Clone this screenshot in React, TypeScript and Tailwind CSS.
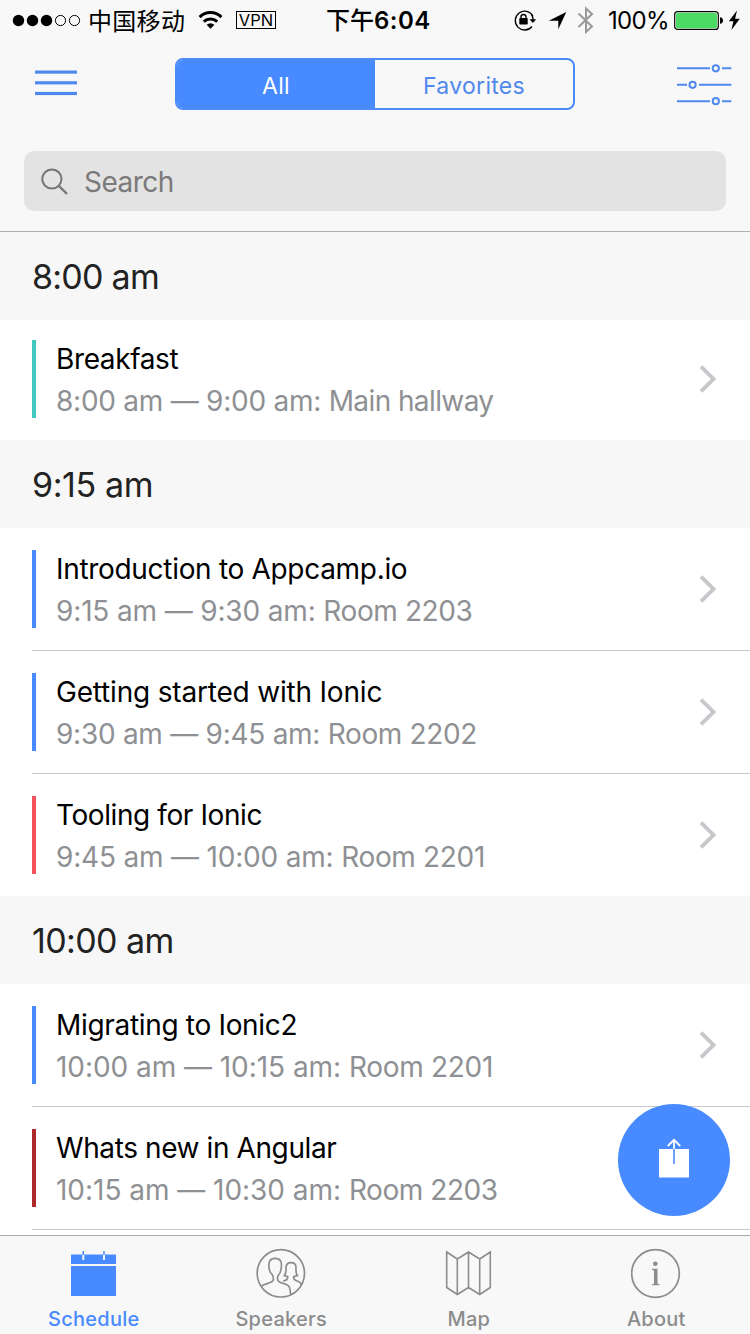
import React from "react";

type Session = {
  title: string;
  hours: string;
  place: string;
  color: string;
  titleSpacing: string;
  hoursSpacing: string;
  placeSpacing: string;
};

type Group = { time: string; spacing: string; sessions: Session[] };

const groups: Group[] = [
  {
    time: "8:00 am",
    spacing: "tracking-[-0.75px]",
    sessions: [
      { title: "Breakfast", hours: "8:00 am — 9:00 am: ", place: "Main hallway", color: "bg-[#41c8bf]", titleSpacing: "tracking-[-0.38px]", hoursSpacing: "tracking-[-0.25px]", placeSpacing: "tracking-[-0.6px]" },
    ],
  },
  {
    time: "9:15 am",
    spacing: "tracking-[-0.4px]",
    sessions: [
      { title: "Introduction to Appcamp.io", hours: "9:15 am — 9:30 am: ", place: "Room 2203", color: "bg-[#488aff]", titleSpacing: "tracking-[-0.31px]", hoursSpacing: "tracking-[-0.15px]", placeSpacing: "tracking-[-0.4px]" },
      { title: "Getting started with Ionic", hours: "9:30 am — 9:45 am: ", place: "Room 2202", color: "bg-[#488aff]", titleSpacing: "tracking-[-0.19px]", hoursSpacing: "tracking-[-0.27px]", placeSpacing: "tracking-[-0.36px]" },
      { title: "Tooling for Ionic", hours: "9:45 am — 10:00 am: ", place: "Room 2201", color: "bg-[#f5525b]", titleSpacing: "tracking-[-0.41px]", hoursSpacing: "tracking-[-0.19px]", placeSpacing: "tracking-[-0.33px]" },
    ],
  },
  {
    time: "10:00 am",
    spacing: "tracking-[-0.6px]",
    sessions: [
      { title: "Migrating to Ionic2", hours: "10:00 am — 10:15 am: ", place: "Room 2201", color: "bg-[#488aff]", titleSpacing: "tracking-[-0.32px]", hoursSpacing: "tracking-[-0.05px]", placeSpacing: "tracking-[-0.3px]" },
      { title: "Whats new in Angular", hours: "10:15 am — 10:30 am: ", place: "Room 2203", color: "bg-[#ac282b]", titleSpacing: "tracking-[-0.4px]", hoursSpacing: "tracking-[-0.03px]", placeSpacing: "tracking-[-0.45px]" },
    ],
  },
];

function StatusBar() {
  return (
    <div className="grid h-10 shrink-0 grid-cols-[326px_1fr_238px] items-start text-[24px] leading-10 text-black">
      <div className="flex h-10 items-center pl-3">
        <svg className="h-10 w-[70px]" viewBox="0 0 70 40" fill="none">
          <circle cx="6.5" cy="20.5" r="5.7" fill="#000" />
          <circle cx="20.5" cy="20.5" r="5.7" fill="#000" />
          <circle cx="34.5" cy="20.5" r="5.7" fill="#000" />
          <circle cx="48.5" cy="20.5" r="5.1" stroke="#000" />
          <circle cx="62.5" cy="20.5" r="5.1" stroke="#000" />
        </svg>
        <span className="ml-[6px] h-10 w-[98px] whitespace-nowrap font-['Noto_Sans_CJK_SC',sans-serif] tracking-[0.3px]">中国移动</span>
        <svg className="ml-3 h-5 w-[25px]" viewBox="0 0 25 20" fill="none" stroke="#000" strokeWidth="3">
          <path d="M1.6 7.1C7.8 1 17.2 1 23.4 7.1" />
          <path d="M5.8 11.6C9.6 8 15.4 8 19.2 11.6" />
          <path d="M12.5 18.7L8.6 14.8Q12.5 11.5 16.4 14.8Z" fill="#000" stroke="none" />
        </svg>
        <span className="ml-[13px] flex h-[18px] w-10 items-center justify-center border border-black text-[16.5px] leading-none">VPN</span>
      </div>
      <div className="h-10 whitespace-nowrap font-medium leading-[38px] tracking-[0.5px]">
        <span className="font-['Noto_Sans_CJK_SC',sans-serif] tracking-normal">下午</span>
        <span className="font-semibold">6:04</span>
      </div>
      <div className="flex h-10 items-center">
        <svg className="h-10 w-[94px]" viewBox="0 0 94 40" fill="none">
          <path d="M20 26.5A9.4 9.4 0 1 1 20.900 16" stroke="#000" strokeWidth="1.3" />
          <path d="M19.500 14.500Q21 16.500 21 20" stroke="#000" strokeWidth="1.3" />
          <path d="M17.500 19.300H24.200L20.800 23Z" fill="#000" />
          <rect x="7.300" y="18" width="8.400" height="6.500" rx="0.700" fill="#000" />
          <path d="M9 19V17Q9 14.500 11.500 14.500Q14 14.500 14 17V19" stroke="#000" strokeWidth="1.400" />
          <path d="M54.300 12L46.300 29.300V20.700H36.800Z" fill="#000" />
          <path d="M66.500 13.500L80 26.500L74 32V8.500L80 14L66.500 27" stroke="#999" strokeWidth="2" />
        </svg>
        <span className="ml-[2px] h-10 w-[61px] whitespace-nowrap text-[24px] leading-[42px] tracking-[-0.7px]">100%</span>
        <svg className="ml-[4px] h-10 w-[70px]" viewBox="0 0 70 40" fill="none">
          <rect x="1.700" y="11.600" width="43.600" height="17.800" rx="3" fill="#fff" stroke="#000" strokeWidth="1.200" />
          <rect x="3" y="12.800" width="41" height="15.400" rx="2" fill="#4cd964" />
          <path d="M47 17.300Q50 17.500 50 20.500Q50 23.500 47 23.700Z" fill="#000" />
          <path d="M64 10.500L55.800 21.300H60.400L58.400 30L66.800 18.800H62.100Z" fill="#000" />
        </svg>
      </div>
    </div>
  );
}

function NavBar() {
  return (
    <div className="flex h-[88px] shrink-0 items-start pl-[35px] pt-[18px]">
      <svg className="mt-[12px] h-[26px] w-[42px]" viewBox="0 0 42 26" fill="#5089ee">
        <rect y="0.5" width="42" height="3.2" />
        <rect y="11.2" width="42" height="3.2" />
        <rect y="21.9" width="42" height="3.2" />
      </svg>
      <div className="ml-[98px] flex h-[52px] w-[400px] overflow-hidden rounded-[8px] border-2 border-[#4c8bf5] text-[23px] leading-[52px] tracking-[0.3px]">
        <div className="w-[198px] bg-[#488aff] text-center text-white">All</div>
        <div className="w-[198px] text-center text-[#5089ee]">Favorites</div>
      </div>
      <svg className="ml-[102px] mt-[4px] h-[46px] w-[55px]" viewBox="0 0 55 46" fill="none" stroke="#5089ee" strokeWidth="2">
        <path d="M0 6.3H33M45 6.3H54.3M0 22.8H10M22 22.8H54.3M0 39.2H33M45 39.2H54.3" />
        <circle cx="38.8" cy="6.3" r="3.1" />
        <circle cx="15.6" cy="22.8" r="3.1" />
        <circle cx="38.8" cy="39.2" r="3.1" />
      </svg>
    </div>
  );
}

function SearchBar() {
  return (
    <div className="h-[104px] shrink-0 border-b border-[#b0b0b0] px-6 pt-[23px]">
      <div className="flex h-[60px] items-center rounded-[10px] bg-[#e3e3e3] pl-[17px] text-[28px] text-[#7a7a7a]">
        <svg className="mt-[2px] h-7 w-7" viewBox="0 0 28 28" fill="none" stroke="#777" strokeWidth="2">
          <circle cx="10.9" cy="11" r="9.6" />
          <path d="M17.9 18L26 25.8" strokeWidth="2.4" />
        </svg>
        <span className="ml-[15px] mt-px tracking-[-0.5px]">Search</span>
      </div>
    </div>
  );
}

function SessionRow({ session, first, last }: { session: Session; first: boolean; last: boolean }) {
  return (
    <div className={first ? "h-[120px] shrink-0 pl-8" : last ? "h-[122px] shrink-0 pl-8" : "h-[123px] shrink-0 pl-8"}>
      <div className={first || last ? "flex h-full items-start" : "flex h-full items-start border-b border-[#c8c7cc]"}>
        <div className={first ? "mt-5 flex h-[78px] grow" : "mt-[22px] flex h-[78px] grow"}>
          <div className={`w-1 ${session.color}`} />
          <div className="ml-5 grow whitespace-nowrap text-[28px]">
            <div className={`-mt-[2px] h-[42px] leading-[42px] text-black ${session.titleSpacing}`}>{session.title}</div>
            <div className="h-[42px] leading-[42px] text-[#8e9093]">
              <span className={session.hoursSpacing}>{session.hours}</span>
              <span className={session.placeSpacing}>{session.place}</span>
            </div>
          </div>
          <svg className="mr-[33px] mt-[25px] h-7 w-[18px]" viewBox="0 0 18 28" fill="none" stroke="#c7c7cc" strokeWidth="3.8">
            <path d="M2 1.7L14.5 14L2 26.3" />
          </svg>
        </div>
      </div>
    </div>
  );
}

function ShareButton() {
  return (
    <button className="absolute left-[618px] top-[1104px] flex h-28 w-28 items-center justify-center rounded-full bg-[#488aff]">
      <svg className="-mt-[4px] h-10 w-8" viewBox="0 0 32 40" fill="none">
        <path d="M1 11H15.2V26H16.800V11H31V39.500H1Z" fill="#fff" />
        <path d="M16 11V1.500M9.800 8L16 1.800L22.200 8" stroke="#fff" strokeWidth="1.8" />
      </svg>
    </button>
  );
}

function ScheduleIcon() {
  return (
    <svg className="h-[51px] w-[51px]" viewBox="0 0 51 51" fill="#488aff">
      <path d="M3 6.5H14.3V12H16.3V6.5H35V12H37V6.5H48V16H3Z" />
      <path d="M3 18H48V48H3Z" />
      <path d="M14.5 3H16V7H14.5ZM35.2 3H36.7V7H35.2Z" />
    </svg>
  );
}

function SpeakersIcon() {
  return (
    <svg className="h-[51px] w-[51px]" viewBox="767 54 153 153" fill="none" stroke="#8c8c8c" strokeWidth="5">
      <circle cx="841.5" cy="130" r="71" />
      <path d="M784 168C794 160 813 161 818 152C820 146 819 139 815 133C809 130 807 121 806 112C804 95 809 85 824.500 85C840 85 845 95 843 112C842 121 841 130 835 134C831 140 831 149 835 154C843 162 862 160 867 171C870 178 870 185 871 194" />
      <path d="M848 153C857 152 863 150 862 140L852 137C858 131 857 121 857 112C858 102 863 98 872 98C881 98 887 103 887 113C887 122 886 132 891 137L880 140C879 148 883 151 890 153C897 155 902 158 904 165" />
    </svg>
  );
}

function MapIcon() {
  return (
    <svg className="h-[51px] w-[51px]" viewBox="0 0 51 51" fill="none" stroke="#8c8c8c" strokeWidth="1.6">
      <path d="M3.700 4L14.300 11L25.500 4L36.700 11L47.300 4V39.500L36.700 46.500L25.500 39.500L14.300 46.500L3.700 39.500ZM14.300 11V46.500M25.500 4V39.500M36.700 11V46.500" />
    </svg>
  );
}

function AboutIcon() {
  return (
    <svg className="h-[51px] w-[51px]" viewBox="1 0 51 51" fill="none">
      <circle cx="25.500" cy="25.500" r="23.800" stroke="#8c8c8c" strokeWidth="1.700" />
      <circle cx="25.300" cy="15.700" r="2.300" fill="#8c8c8c" />
      <path d="M22 20.800H27.500V35.200Q27.500 36.300 29.500 36.300V37.300H22V36.300Q24 36.300 24 35.200V23Q24 21.900 22 21.900Z" fill="#8c8c8c" />
    </svg>
  );
}

const tabs = [
  { label: "Schedule", icon: <ScheduleIcon />, color: "text-[#488aff]" },
  { label: "Speakers", icon: <SpeakersIcon />, color: "text-[#8c8c8c]" },
  { label: "Map", icon: <MapIcon />, color: "text-[#8c8c8c]" },
  { label: "About", icon: <AboutIcon />, color: "text-[#8c8c8c]" },
];

export default function App() {
  return (
    <div className="relative flex h-[1334px] w-[750px] flex-col overflow-hidden bg-white font-['Inter','Noto_Sans_CJK_SC',sans-serif]">
      <header className="flex shrink-0 flex-col bg-[#f8f8f8]">
        <StatusBar />
        <NavBar />
        <SearchBar />
      </header>
      <main className="flex min-h-0 grow flex-col overflow-hidden">
        {groups.map((group, g) => (
          <section key={group.time} className="shrink-0">
            <h2 className={`h-[88px] bg-[#f7f7f7] pl-8 text-[34px] leading-[89px] text-[#222] ${group.spacing}`}>{group.time}</h2>
            {group.sessions.map((session, i) => (
              <SessionRow
                key={session.title}
                session={session}
                first={group.sessions.length === 1}
                last={g === 1 && i === group.sessions.length - 1}
              />
            ))}
          </section>
        ))}
      </main>
      <nav className="grid h-[99px] shrink-0 grid-cols-4 border-t border-[#a9a9ab] bg-[#f8f8f8]">
        {tabs.map((tab) => (
          <div key={tab.label} className={`flex flex-col items-center pt-[12px] ${tab.color}`}>
            {tab.icon}
            <span className="mt-[8px] text-[20px] font-medium leading-6 tracking-[0.25px]">{tab.label}</span>
          </div>
        ))}
      </nav>
      <ShareButton />
    </div>
  );
}
